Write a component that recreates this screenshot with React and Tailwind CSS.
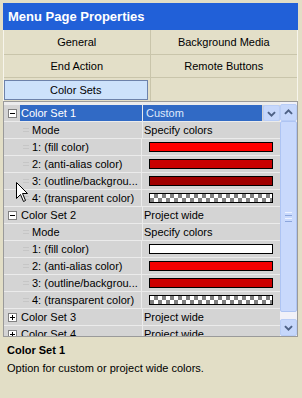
import React from "react"

const checker = "bg-[conic-gradient(#808080_25%,#ffffff_0_50%,#808080_0_75%,#ffffff_0)] bg-[length:8px_8px]"

const Chevron = ({ up }) => (
    <svg width="17" height="17" viewBox="0 0 17 17">
        <path d={up ? "M4.5 10 L8.5 6 L12.5 10" : "M4.5 7 L8.5 11 L12.5 7"} fill="none" stroke="#4d6185" strokeWidth="2.2" />
    </svg>
)

const ExpandBox = ({ open }) => (
    <svg width="9" height="9" viewBox="0 0 9 9" className="shrink-0">
        <rect x="0.5" y="0.5" width="8" height="8" fill="#fff" stroke="#808080" />
        <path d="M2 4.5 H7" stroke="#000" />
        {!open && <path d="M4.5 2 V7" stroke="#000" />}
    </svg>
)

const Swatch = ({ color }) => (
    <div className={"ml-[6px] mr-[7px] h-[10px] w-[124px] border border-black " + (color === "checker" ? checker : "")}>
        {color !== "checker" && <div className="h-full w-full" style={{ backgroundColor: color }} />}
    </div>
)

const CategoryRow = ({ label, value, open, selected }) => (
    <div className="flex h-[17px] shrink-0 border-b border-[#ebebeb] bg-[#d4d4d4]">
        <div className="flex w-[138px] items-center pl-[4px]">
            <ExpandBox open={open} />
            <div className={"ml-[3px] flex h-full flex-1 items-center pl-[1px] " + (selected ? "bg-[#316ac5] text-white" : "")}>{label}</div>
        </div>
        <div className="w-px bg-[#ebebeb]" />
        {selected ? (
            <div className="flex flex-1 items-center">
                <div className="flex h-full flex-1 items-center bg-[#316ac5] pl-[3px] text-[#dfe9fb]">{value}</div>
                <div className="ml-px flex h-[16px] w-[17px] items-center justify-center rounded-[2px] border border-[#b9cdf6] bg-[#c6d7fb]">
                    <Chevron />
                </div>
            </div>
        ) : (
            <div className="flex flex-1 items-center pl-[1px]">{value}</div>
        )}
    </div>
)

const ChildRow = ({ label, value, color }) => (
    <div className="flex h-[17px] shrink-0 border-b border-[#ebebeb] bg-[#d4d4d4]">
        <div className="flex w-[138px] items-center overflow-hidden whitespace-nowrap">
            <div className="flex w-[28px] shrink-0 flex-col items-end gap-[2px] pr-[3px]">
                <div className="h-px w-[6px] bg-[#c6c6c6]" />
                <div className="h-px w-[6px] bg-[#c6c6c6]" />
            </div>
            <span>{label}</span>
        </div>
        <div className="w-px bg-[#ebebeb]" />
        <div className="flex flex-1 items-center pl-[1px]">
            {color ? <Swatch color={color} /> : value}
        </div>
    </div>
)

const sets = [
    { label: "Color Set 1", value: "Custom", open: true, selected: true, colors: ["#ff0000", "#c80000", "#a00000", "checker"] },
    { label: "Color Set 2", value: "Project wide", open: true, colors: ["#ffffff", "#f50000", "#cc0000", "checker"] },
    { label: "Color Set 3", value: "Project wide" },
    { label: "Color Set 4", value: "Project wide" },
]

const names = ["1: (fill color)", "2: (anti-alias color)", "3: (outline/backgrou...", "4: (transparent color)"]

export default function App() {
    return (
        <div className="relative h-[398px] w-[302px] overflow-hidden bg-[#e2dec6] pl-[3px] pr-[4px] pt-[3px] font-['Liberation_Sans',Arial,sans-serif] text-[11px] text-black">
            <div className="flex h-[27px] items-center bg-[#2160d8] pl-[5px] pt-[1px] text-[13px] font-bold text-white">Menu Page Properties</div>

            <div className="grid grid-cols-2 border-x border-[#f7f5ec] bg-[#e3dfc8]">
                <div className="flex h-[25px] items-center justify-center border-b border-r border-[#c9c5ab]">General</div>
                <div className="flex h-[25px] items-center justify-center border-b border-[#c9c5ab]">Background Media</div>
                <div className="flex h-[23px] items-center justify-center border-b border-r border-[#c9c5ab]">End Action</div>
                <div className="flex h-[23px] items-center justify-center border-b border-[#c9c5ab]">Remote Buttons</div>
                <div className="h-[23px] border-r border-[#c9c5ab] pt-[2px] pr-[2px]">
                    <div className="flex h-[20px] items-center justify-center border border-[#6d82aa] bg-[#cde2fb]">Color Sets</div>
                </div>
                <div className="h-[23px]" />
            </div>

            <div className="flex h-[236px] border border-[#9a9a9a] bg-[#ececec]">
                <div className="flex flex-1 flex-col overflow-hidden pt-[3px]">
                    {sets.map((s) => (
                        <React.Fragment key={s.label}>
                            <CategoryRow label={s.label} value={s.value} open={s.open} selected={s.selected} />
                            {s.open && (
                                <>
                                    <ChildRow label="Mode" value="Specify colors" />
                                    {names.map((n, i) => (
                                        <ChildRow key={n} label={n} color={s.colors[i]} />
                                    ))}
                                </>
                            )}
                        </React.Fragment>
                    ))}
                </div>
                <div className="flex w-[17px] flex-col bg-[#f1f1f8] pt-[2px]">
                    <div className="flex h-[17px] items-center justify-center rounded-[2px] border border-[#b9cdf6] bg-[#c6d7fb]">
                        <Chevron up />
                    </div>
                    <div className="flex h-[191px] flex-col items-center justify-center gap-[2px] rounded-[2px] border border-[#aec4f3] bg-[#c9d9fc]">
                        <div className="h-px w-[7px] bg-[#eef3ff]" />
                        <div className="h-px w-[7px] bg-[#8ca6dc]" />
                        <div className="h-px w-[7px] bg-[#eef3ff]" />
                        <div className="h-px w-[7px] bg-[#8ca6dc]" />
                    </div>
                    <div className="flex-1" />
                    <div className="flex h-[17px] items-center justify-center rounded-[2px] border border-[#b9cdf6] bg-[#c6d7fb]">
                        <Chevron />
                    </div>
                </div>
            </div>

            <div className="pl-[4px] pt-[6px]">
                <div className="h-[14px] font-bold leading-[14px]">Color Set 1</div>
                <div className="mt-[4px] h-[14px] leading-[14px]">Option for custom or project wide colors.</div>
            </div>

            <svg width="13" height="21" viewBox="0 0 13 21" className="absolute left-[16px] top-[182px]">
                <path d="M0.5 0.5 L0.5 16.5 L4.5 12.5 L7.5 19.5 L9.5 18.5 L6.5 11.5 L11.5 11.5 Z" fill="#fff" stroke="#000" />
            </svg>
        </div>
    )
}
